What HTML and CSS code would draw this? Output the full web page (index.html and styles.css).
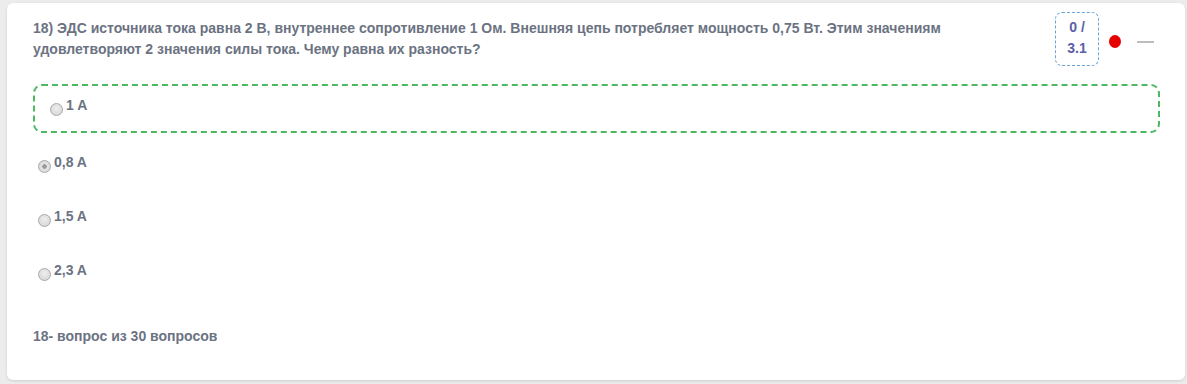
FILE: index.html
```html
<!DOCTYPE html>
<html lang="ru">
<head>
    <meta charset="UTF-8">
    <title>Тест</title>
    <link rel="stylesheet" href="styles.css">
</head>
<body>
<div class="card">
    <div class="question-head">
        <div class="question-text">18) ЭДС источника тока равна 2 В, внутреннее сопротивление 1 Ом. Внешняя цепь потребляет мощность 0,75 Вт. Этим значениям удовлетворяют 2 значения силы тока. Чему равна их разность?</div>
        <div class="score">0 /<br>3.1</div>
        <span class="status-dot"></span>
        <span class="collapse-dash"></span>
    </div>

    <div class="options">
        <label class="option option-marked">
            <input type="radio" name="q18" disabled>
            <span>1 A</span>
        </label>
        <label class="option">
            <input type="radio" name="q18" checked disabled>
            <span>0,8 A</span>
        </label>
        <label class="option">
            <input type="radio" name="q18" disabled>
            <span>1,5 A</span>
        </label>
        <label class="option">
            <input type="radio" name="q18" disabled>
            <span>2,3 A</span>
        </label>
    </div>

    <div class="counter">18- вопрос из 30 вопросов</div>
</div>
</body>
</html>
```

FILE: styles.css
```css
body {
    font-family: "Liberation Sans", Arial, sans-serif;
    font-size: 14px;
    font-weight: bold;
    color: #6b7382;
    background-color: #ececec;
    margin: 0;
    padding: 3px 2px 4px 7px;
}

.card {
    background-color: #ffffff;
    border-radius: 6px;
    box-shadow: 0 1px 3px rgba(0, 0, 0, 0.12);
    padding: 11px 25px 35px 26px;
}

.question-head {
    display: flex;
    align-items: flex-start;
}

.question-text {
    flex: 1;
    line-height: 21px;
    padding-top: 4px;
    padding-right: 20px;
}

.score {
    width: 42px;
    height: 48px;
    border: 1px dashed #6aa3d8;
    border-radius: 7px;
    color: #5c5fa8;
    text-align: center;
    line-height: 21px;
    padding-top: 4px;
    margin-top: -2px;
}

.status-dot {
    width: 12px;
    height: 13px;
    border-radius: 50%;
    background-color: #e60000;
    margin: 21px 0 0 10px;
}

.collapse-dash {
    width: 17px;
    height: 2px;
    background-color: #bdbdbd;
    margin: 27px 6px 0 16px;
}

.options {
    display: flex;
    flex-direction: column;
    margin-top: 18px;
}

.option {
    display: flex;
    align-items: flex-start;
    line-height: 17px;
    padding-left: 5px;
    margin-bottom: 35px;
}

.option-marked {
    border: 2px dashed #4cb860;
    border-radius: 9px;
    padding: 11px 0 15px 15px;
    margin-bottom: 21px;
}

.option input {
    appearance: none;
    width: 13px;
    height: 13px;
    margin: 6px 3px 0 0;
    border: 1px solid #a9a9a9;
    border-radius: 50%;
    background: radial-gradient(circle at 50% 40%, #eeeeee, #d2d2d2);
    box-sizing: border-box;
}

.option input:checked {
    background: radial-gradient(circle, #9a9a9a 0 2px, #e4e4e4 2.5px, #d2d2d2);
}

.counter {
    margin-top: 12px;
    line-height: 17px;
}
```
